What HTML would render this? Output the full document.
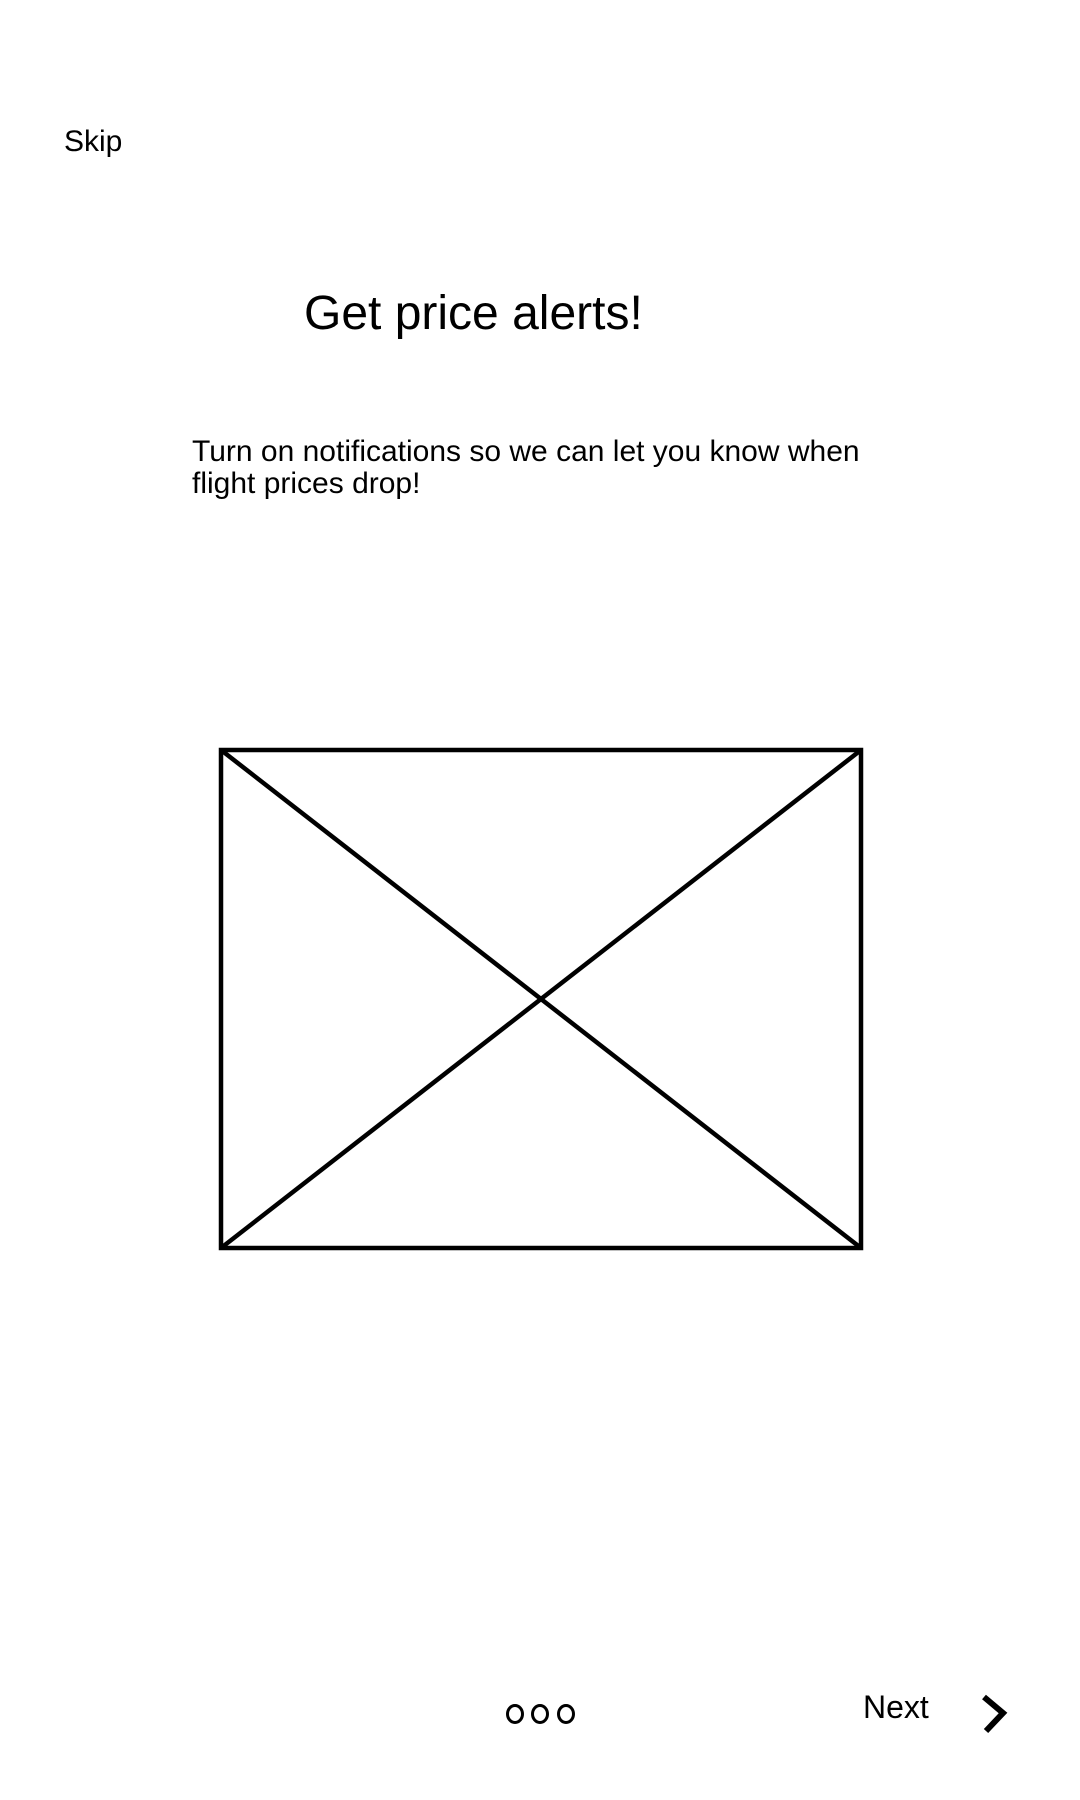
<!DOCTYPE html>
<html><head><meta charset="utf-8"><style>
html,body{margin:0;padding:0;background:#fff;}
body{width:1080px;height:1800px;position:relative;overflow:hidden;font-family:"Liberation Sans",Arial,sans-serif;color:#000;}
.t{position:absolute;white-space:nowrap;line-height:1;}
</style></head><body>
<div class="t" style="left:64px;top:127px;font-size:30px;">Skip</div>
<div class="t" style="left:304px;top:290px;font-size:48px;">Get price alerts!</div>
<div class="t" style="left:192px;top:436px;font-size:30px;line-height:32px;">Turn on notifications so we can let you know when<br>flight prices drop!</div>
<svg style="position:absolute;left:0;top:0" width="1080" height="1800">
<g stroke="#000" stroke-width="4.5" fill="none">
<rect x="221" y="750" width="640" height="498"/>
<line x1="221" y1="750" x2="861" y2="1248"/>
<line x1="861" y1="750" x2="221" y2="1248"/>
</g>
<g stroke="#000" stroke-width="3" fill="none">
<ellipse cx="515" cy="1714" rx="7.5" ry="8.5"/>
<ellipse cx="540" cy="1714" rx="7.5" ry="8.5"/>
<ellipse cx="566" cy="1714" rx="7.5" ry="8.5"/>
</g>
<polyline points="984,1697 1003,1713 986,1731" stroke="#000" stroke-width="6" fill="none"/>
</svg>
<div class="t" style="left:863px;top:1691px;font-size:32px;">Next</div>
</body></html>
